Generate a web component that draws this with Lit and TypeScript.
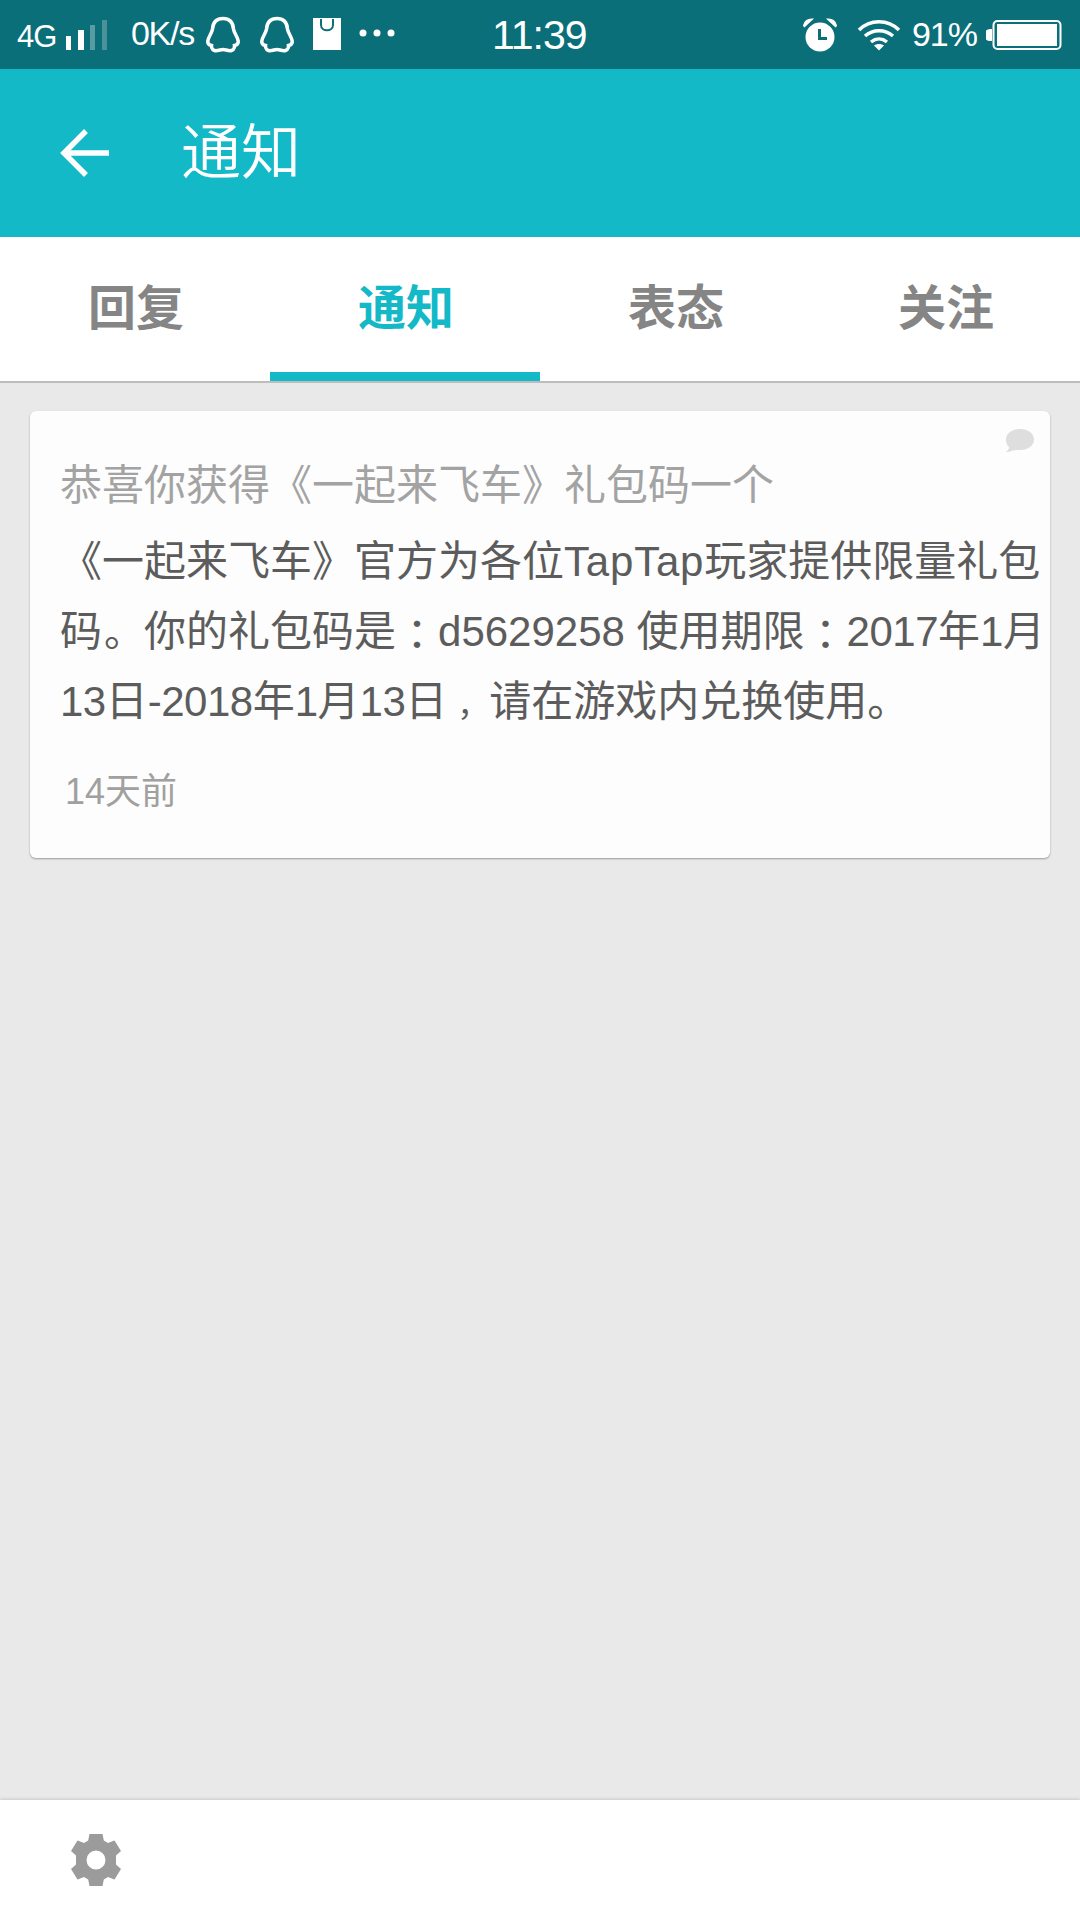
import { LitElement, html, css, svg } from 'lit';
import { customElement, property } from 'lit/decorators.js';

// QQ penguin outline, used twice in the status bar
const penguin = svg`<path d="M18 2.500C11 2.500 8 7 7.500 13 7 17 3.500 20.500 2.800 25c-.3 2.500 1 4 3.700 4.500 0 0-.5 4 3 5 3 .8 6-1 8.500-1s5.500 1.800 8.500 1c3.500-1 3-5 3-5 2.700-.5 4-2 3.700-4.500C32.500 20.500 29 17 28.500 13 28 7 25 2.500 18 2.500Z" fill="none" stroke="#fff" stroke-width="3.500"/>`;

@customElement('status-bar')
export class StatusBar extends LitElement {
  static styles = css`
    :host { display: flex; align-items: center; height: 69px; background: #0a6f79; color: #fff; font-family: 'Liberation Sans', sans-serif; position: relative; box-sizing: border-box; padding-left: 17px; }
    .net { font-size: 31px; letter-spacing: -1px; margin-top: 4px; width: 38px; }
    .speed { font-size: 34px; letter-spacing: -1.300px; margin-left: 21px; margin-top: -2px; width: 65px; white-space: nowrap; }
    svg { display: block; flex: none; }
    .clock { position: absolute; left: 492px; top: 13px; font-size: 41px; line-height: 44px; letter-spacing: -1px; }
    .right { position: absolute; right: 18px; top: 0; height: 69px; display: flex; align-items: center; }
    .pct { font-size: 34px; letter-spacing: -1px; margin: 0 9px 0 11px; }
  `;
  render() {
    return html`
      <span class="net">4G</span>
      <svg width="44" height="32" viewBox="0 0 44 32" style="margin-left:11px;margin-top:2px">
        <rect x="0" y="16" width="5" height="14" fill="#fff"/>
        <rect x="12" y="10" width="6" height="20" fill="#fff"/>
        <rect x="24" y="5" width="5" height="25" fill="#5a9aa2"/>
        <rect x="36" y="0" width="5" height="30" fill="#4a919a"/>
      </svg>
      <span class="speed">0K/s</span>
      <svg width="36" height="38" viewBox="0 0 36 38" style="margin-left:9px;margin-top:1px">${penguin}</svg>
      <svg width="36" height="38" viewBox="0 0 36 38" style="margin-left:18px;margin-top:1px">${penguin}</svg>
      <svg width="28" height="32" viewBox="0 0 28 32" style="margin-left:18px;margin-top:-1px">
        <path d="M0 0h28v32H0Z" fill="#fff"/>
        <path d="M8 1v6c0 7 12 7 12 0V1" fill="none" stroke="#0a6f79" stroke-width="2"/>
      </svg>
      <svg width="36" height="10" viewBox="0 0 36 10" style="margin-left:18px;margin-top:-3px">
        <circle cx="4" cy="5" r="3.500" fill="#fff"/><circle cx="18" cy="5" r="3.500" fill="#fff"/><circle cx="32" cy="5" r="3.500" fill="#fff"/>
      </svg>
      <span class="clock">11:39</span>
      <div class="right">
        <svg width="34" height="34" viewBox="0 0 34 34">
          <circle cx="17" cy="19" r="14.500" fill="#fff"/>
          <path d="M1 7.500C2 3.500 5 1.500 8.500 1.500L1.500 8ZM33 7.500C32 3.500 29 1.500 25.500 1.500L32.500 8Z" fill="#fff" stroke="#fff" stroke-width="2"/>
          <path d="M16.500 11v9.500H24" fill="none" stroke="#0a6f79" stroke-width="3"/>
        </svg>
        <svg width="44" height="34" viewBox="0 0 44 34" style="margin-left:20px">
          <path d="M2 12C13 1 31 1 42 12M8 18c8-7 20-7 28 0M14 24c5-4 11-4 16 0" fill="none" stroke="#fff" stroke-width="3.500"/>
          <path d="M17 27.500c3-2 7-2 10 0l-5 5Z" fill="#fff"/>
        </svg>
        <span class="pct">91%</span>
        <svg width="76" height="32" viewBox="0 0 76 32">
          <path d="M6 10H4a4 4 0 0 0 0 12h2Z" fill="#fff"/>
          <rect x="7.500" y="2" width="67" height="28" rx="4" fill="none" stroke="#fff" stroke-width="2"/>
          <rect x="11" y="5" width="60" height="22" fill="#fff"/>
        </svg>
      </div>
    `;
  }
}

@customElement('app-root')
export class AppRoot extends LitElement {
  @property({ type: Number }) active = 1;

  static styles = css`
    :host { display: flex; flex-direction: column; width: 1080px; height: 1920px; background: #e9e9e9; font-family: 'Liberation Sans', 'Noto Sans CJK SC', sans-serif; overflow: hidden; }
    .appbar { height: 168px; background: #14b9c8; display: flex; align-items: center; padding-left: 60px; box-sizing: border-box; color: #fff; flex: none; }
    .appbar svg { display: block; }
    .appbar h1 { margin: -10px 0 0 71px; font-size: 60px; font-weight: 350; line-height: 1; font-family: 'Noto Sans CJK SC', sans-serif; }
    .tabs { display: flex; height: 146px; background: #fff; flex: none; box-sizing: border-box; border-bottom: 2px solid #bdbdbd; }
    .tab { width: 270px; display: flex; align-items: center; justify-content: center; font-size: 48px; font-weight: 700; color: #858585; box-sizing: border-box; padding: 0 0 11px 2px; font-family: 'Noto Sans CJK SC', sans-serif; }
    .tab.on { color: #14b9c8; border-bottom: 9px solid #14b9c8; padding-bottom: 2px; }
    .list { flex: 1; padding: 28px 30px 0; }
    .card { position: relative; background: #fdfdfd; border-radius: 6px; height: 447px; box-sizing: border-box; padding: 50px 0 0 30px; box-shadow: 0 1px 2px rgba(0,0,0,.35); }
    .bubble { position: absolute; right: 16px; top: 18px; display: block; }
    .title { font-size: 42px; line-height: 50px; color: #a3a3a3; white-space: nowrap; }
    .body { margin: 16px 0 0 0; font-size: 42px; line-height: 70px; color: #5c5c5c; white-space: nowrap; }
    .colon { font-family: 'Noto Sans CJK TC', sans-serif; line-height: 1; vertical-align: -4px; }
    .stop { margin-left: 2px; font-size: 40px; }
    .comma { margin-left: 10px; font-size: 32px; }
    .tap { letter-spacing: .8px; }
    .num { letter-spacing: -.5px; }
    .time { margin: 30px 0 0 5px; font-size: 36px; line-height: 44px; color: #a0a0a0; }
    .footer { height: 120px; background: #fff; flex: none; display: flex; align-items: center; padding-left: 70px; box-sizing: border-box; box-shadow: 0 -1px 3px rgba(0,0,0,.14); }
    .footer svg { display: block; }
  `;

  render() {
    const tabs = ['回复', '通知', '表态', '关注'];
    return html`
      <status-bar></status-bar>
      <div class="appbar">
        <svg width="50" height="50" viewBox="0 0 50 50">
          <path d="M49 25H6M26 3 4 25l22 22" fill="none" stroke="#fff" stroke-width="5.500"/>
        </svg>
        <h1>通知</h1>
      </div>
      <div class="tabs">
        ${tabs.map((t, i) => html`<div class="tab ${i === this.active ? 'on' : ''}">${t}</div>`)}
      </div>
      <div class="list">
        <div class="card">
          <svg class="bubble" width="28" height="24" viewBox="0 0 28 24">
            <path d="M14 0c8 0 14 4.500 14 10.500S22 21 14 21c-3 0-5.500-.3-8 .8-2 1-4 1.400-6 1.200 2-1.500 3-3 3-5C1 16 0 13.500 0 10.500 0 4.500 6 0 14 0Z" fill="#dedede"/>
          </svg>
          <div class="title">恭喜你获得《一起来飞车》礼包码一个</div>
          <div class="body">《一起来飞车》官方为各位<span class="tap">TapTap</span>玩家提供限量礼包<br>码<span class="stop">。</span>你的礼包码是<span class="colon">：</span>d5629258 使用期限<span class="colon">：</span><span class="num">2017</span>年<span class="num">1</span>月<br><span class="num">13</span>日<span class="num">-2018</span>年<span class="num">1</span>月<span class="num">13</span>日<span class="comma">，</span>请在游戏内兑换使用。</div>
          <div class="time">14天前</div>
        </div>
      </div>
      <div class="footer">
        <svg width="52" height="52" viewBox="-26 -26 52 52">
          <path fill="#9b9b9b" fill-rule="evenodd" d="M-6.500-26H6.500L7.800-19.500 12-17 18.500-19.500 25-9 20-4.500V4.500L25 9 18.500 19.500 12 17 7.800 19.500 6.500 26H-6.500L-7.800 19.500-12 17-18.500 19.500-25 9-20 4.500V-4.500L-25-9-18.500-19.500-12-17-7.800-19.500ZM0-9.500A9.500 9.500 0 1 0 0 9.500 9.500 9.500 0 1 0 0-9.500Z"/>
        </svg>
      </div>
    `;
  }
}
